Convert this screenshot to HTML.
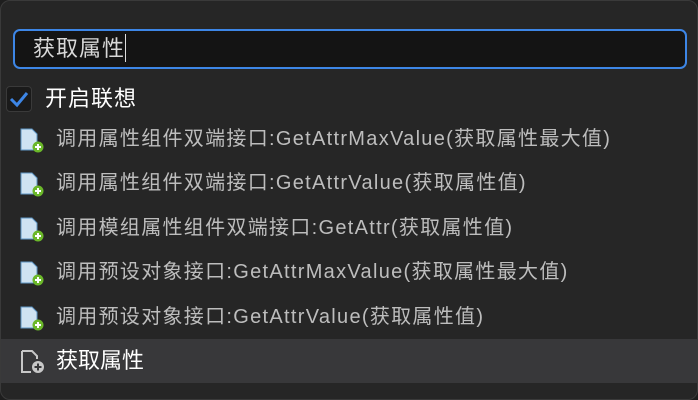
<!DOCTYPE html><html><head><style>
body{margin:0;width:698px;height:400px;background:#1e1e1e;font-family:"Liberation Sans","Noto Sans CJK SC",sans-serif;overflow:hidden}
.p{position:absolute;left:0;top:0;width:696px;height:398px;border:1px solid #3a3a3a;border-radius:10px;background:#262626}
.in{position:absolute;left:12px;top:28px;width:652px;height:36px;border:2px solid #3d86e6;border-radius:7px;background:#141414;color:#d8d8d8;font-size:22px;line-height:36px;padding-left:18px;box-sizing:content-box;letter-spacing:1px}
.cur{display:inline-block;width:1px;height:28px;background:#ddd;vertical-align:middle;margin-top:-4px}
.cb{position:absolute;left:5px;top:85px;width:24px;height:24px;border:1px solid #3a3a3a;border-radius:4px;background:#1a1a1a}
.lab{position:absolute;left:44px;top:84px;color:#fff;font-size:22px;line-height:28px;letter-spacing:1px}
.it{position:absolute;left:0;width:696px;height:44px;color:#bdbdbd;font-size:20px;line-height:44px;letter-spacing:1.3px}
.it span{position:absolute;left:55px;white-space:nowrap}
.it svg{position:absolute;left:19px;top:10px}
.sel{background:#38383a;color:#fff;font-size:22px;letter-spacing:0}
</style></head><body><div class="p">
<div class="in">获取属性<span class="cur"></span></div>
<div class="cb"><svg width="24" height="24"><path d="M4 12 L10 18 L20 6" stroke="#3d86e6" stroke-width="3" fill="none"/></svg></div>
<div class="lab">开启联想</div>
<div class="it" style="top:116px"><svg width="26" height="26"><path d="M1 2h11l5 5v16H1z" fill="#cfe3f2" stroke="#5e95c4"/><circle cx="18" cy="20" r="5.5" fill="#6bb82a"/><path d="M18 17v6M15 20h6" stroke="#fff" stroke-width="2"/></svg><span>调用属性组件双端接口:GetAttrMaxValue(获取属性最大值)</span></div>
<div class="it" style="top:160px"><svg width="26" height="26"><path d="M1 2h11l5 5v16H1z" fill="#cfe3f2" stroke="#5e95c4"/><circle cx="18" cy="20" r="5.5" fill="#6bb82a"/><path d="M18 17v6M15 20h6" stroke="#fff" stroke-width="2"/></svg><span>调用属性组件双端接口:GetAttrValue(获取属性值)</span></div>
<div class="it" style="top:205px"><svg width="26" height="26"><path d="M1 2h11l5 5v16H1z" fill="#cfe3f2" stroke="#5e95c4"/><circle cx="18" cy="20" r="5.5" fill="#6bb82a"/><path d="M18 17v6M15 20h6" stroke="#fff" stroke-width="2"/></svg><span>调用模组属性组件双端接口:GetAttr(获取属性值)</span></div>
<div class="it" style="top:249px"><svg width="26" height="26"><path d="M1 2h11l5 5v16H1z" fill="#cfe3f2" stroke="#5e95c4"/><circle cx="18" cy="20" r="5.5" fill="#6bb82a"/><path d="M18 17v6M15 20h6" stroke="#fff" stroke-width="2"/></svg><span>调用预设对象接口:GetAttrMaxValue(获取属性最大值)</span></div>
<div class="it" style="top:294px"><svg width="26" height="26"><path d="M1 2h11l5 5v16H1z" fill="#cfe3f2" stroke="#5e95c4"/><circle cx="18" cy="20" r="5.5" fill="#6bb82a"/><path d="M18 17v6M15 20h6" stroke="#fff" stroke-width="2"/></svg><span>调用预设对象接口:GetAttrValue(获取属性值)</span></div>
<div class="it sel" style="top:338px"><svg width="26" height="26"><path d="M2 2h10l5 5v3M11 23H2V2" fill="none" stroke="#c8c8c8" stroke-width="2"/><circle cx="18" cy="18" r="6" fill="#c8c8c8"/><path d="M18 14.5v7M14.5 18h7" stroke="#38383a" stroke-width="2"/></svg><span>获取属性</span></div>
</div></body></html>
